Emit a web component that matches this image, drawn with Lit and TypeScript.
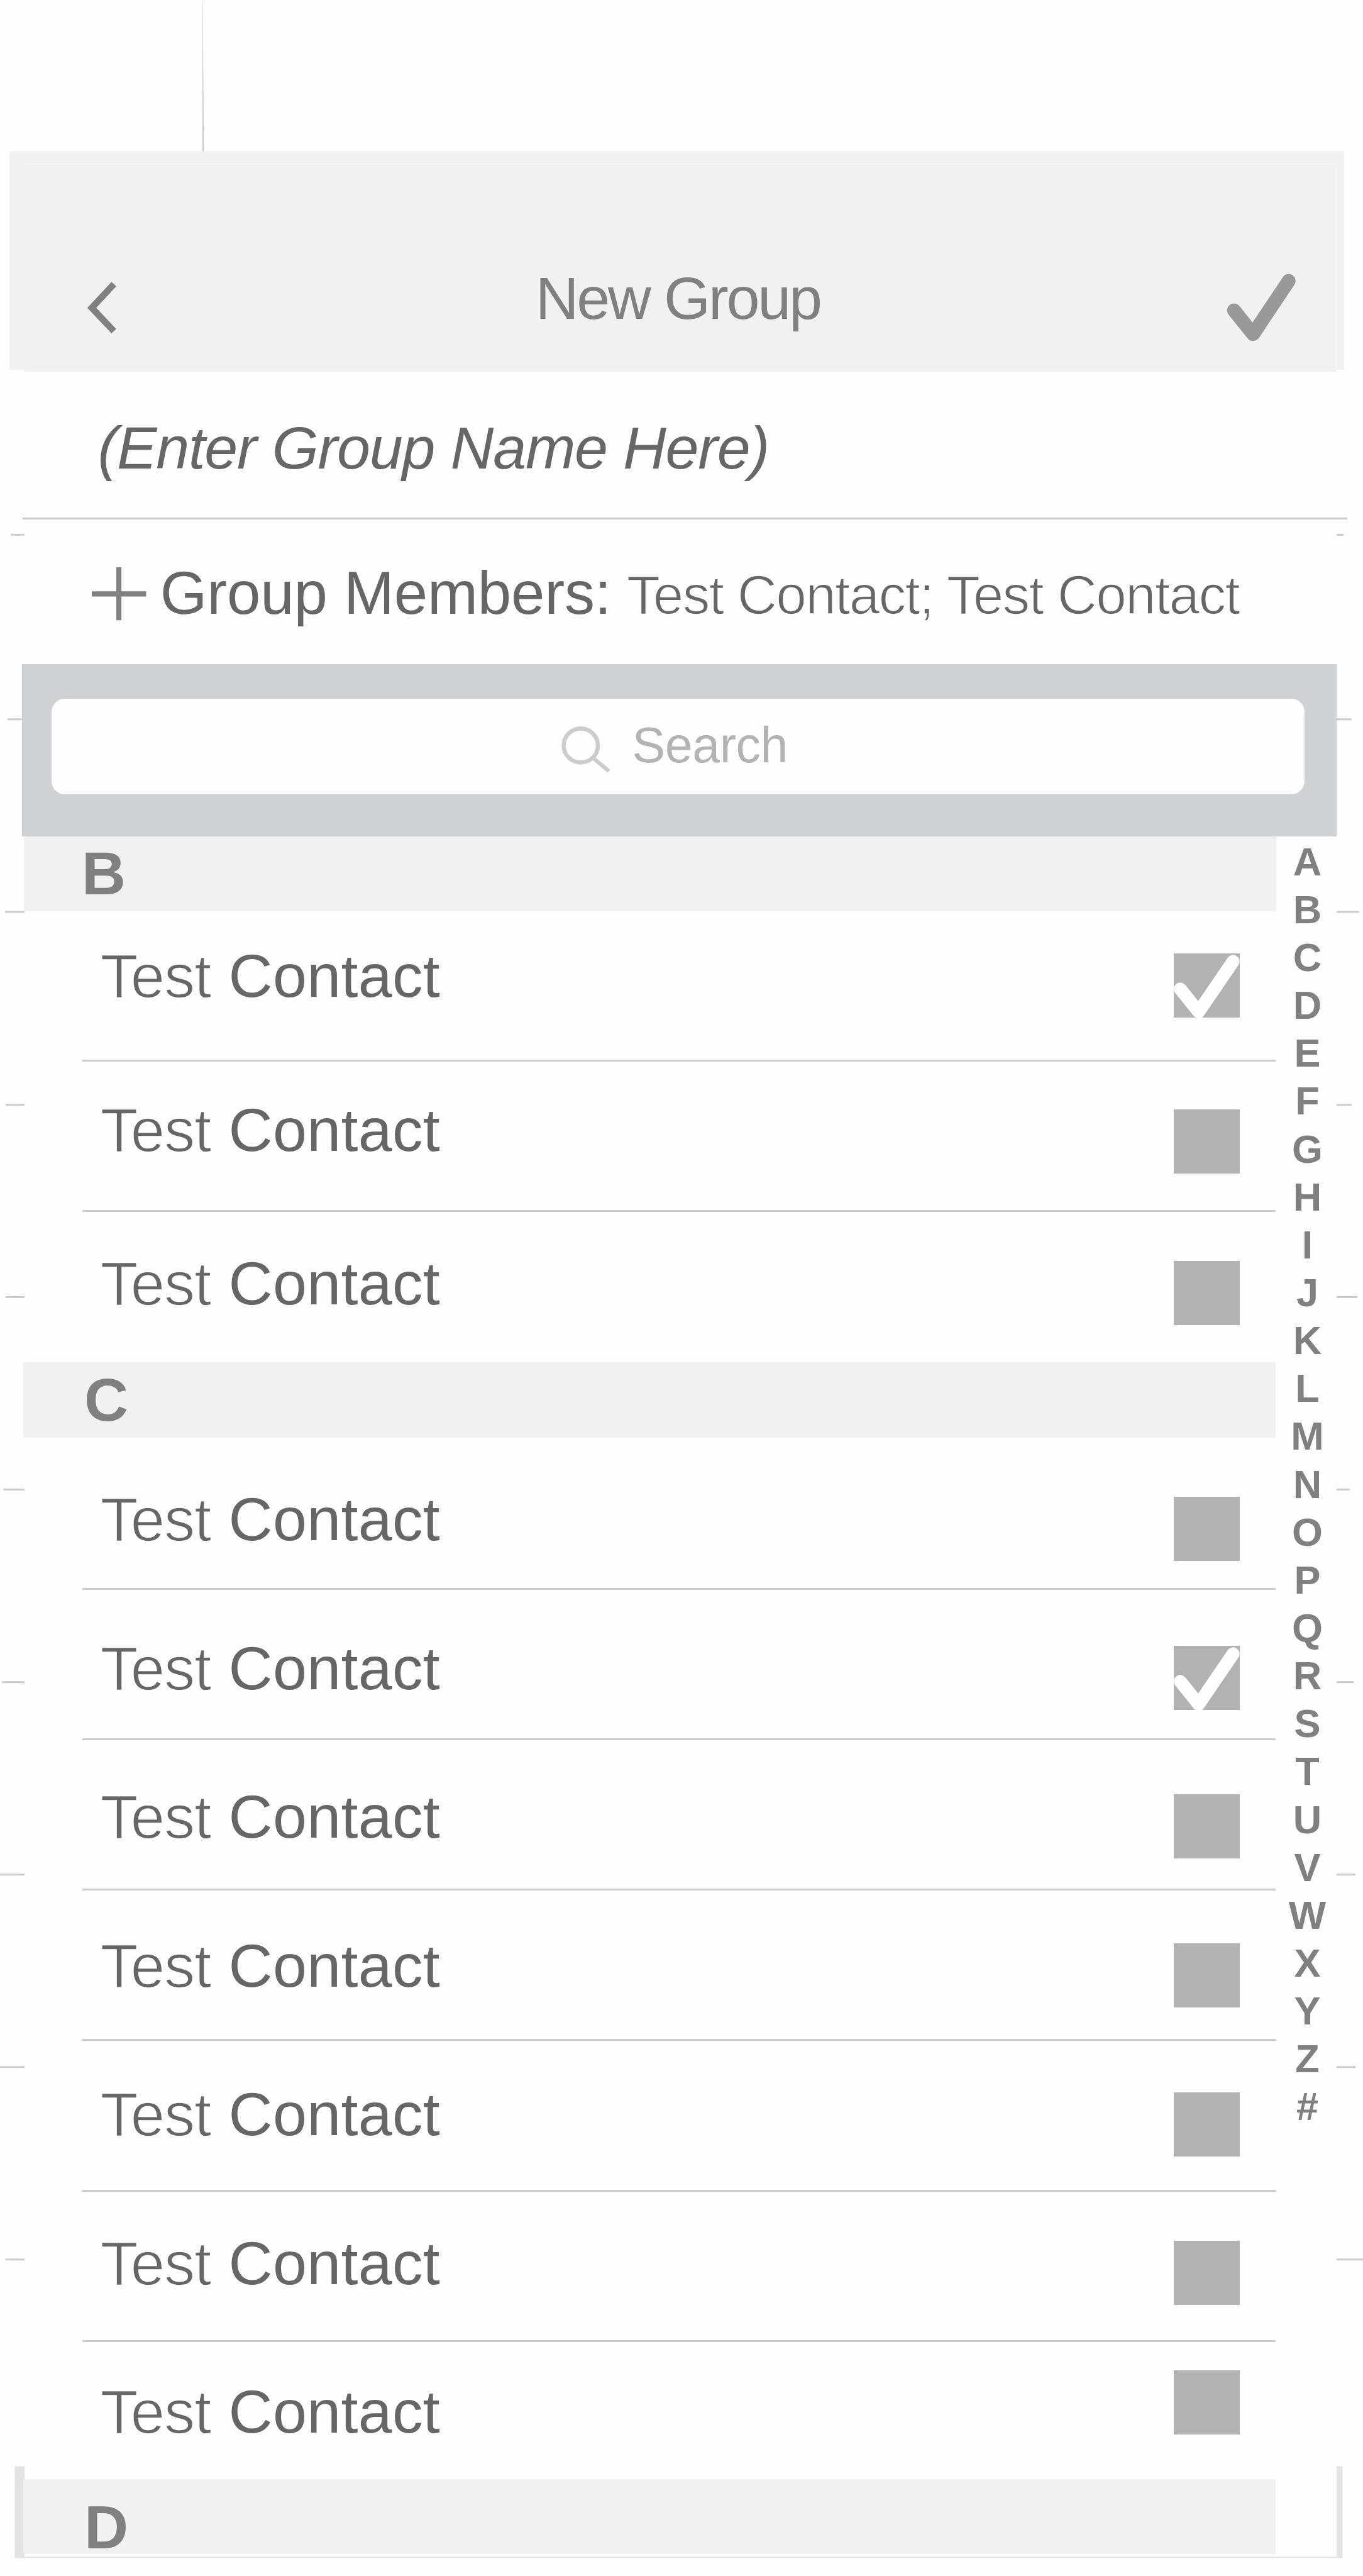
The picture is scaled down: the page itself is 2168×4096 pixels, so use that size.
import { LitElement, html, css, svg, nothing } from "lit";
import { customElement, property } from "lit/decorators.js";

interface Contact {
  first: string;
  last: string;
  checked?: boolean;
  height: number;
  textTop: number;
  boxTop: number;
}

interface Section {
  letter: string;
  kind: string;
  contacts: Contact[];
}

const contact = (height: number, textTop: number, boxTop: number, checked = false): Contact => ({
  first: "Test",
  last: "Contact",
  checked,
  height,
  textTop,
  boxTop,
});

const SECTIONS: Section[] = [
  {
    letter: "B",
    kind: "first",
    contacts: [
      contact(238.7, 52.8, 67.1, true),
      contact(239.3, 58.7, 76.5),
      contact(238.7, 64, 78.1),
    ],
  },
  {
    letter: "C",
    kind: "middle",
    contacts: [
      contact(242.3, 80.6, 94.9),
      contact(239.5, 74.8, 89.5, true),
      contact(238.6, 71.8, 85.9),
      contact(239.2, 69.8, 84.5),
      contact(239.4, 67.1, 81.5),
      contact(239.2, 64.2, 78.5),
      contact(217.9, 61.6, 44.8),
    ],
  },
  { letter: "D", kind: "last", contacts: [] },
];

const INDEX = [..."ABCDEFGHIJKLMNOPQRSTUVWXYZ#"];

/* Rule stubs in the side gutters: [y, left start, left end, right end] */
const STUBS: number[][] = [
  [850.3, 17, 39.2, 2137],
  [1143.7, 12, 39.2, 2150],
  [1450.1, 8, 39.2, 2162],
  [1756.7, 8.8, 39.2, 2150],
  [2062.6, 8.8, 39.2, 2159],
  [2368.5, 5.4, 39.2, 2147],
  [2674.8, 3, 39.2, 2153.5],
  [2980.8, 0, 39.2, 2156],
  [3286.8, 0, 39.2, 2156],
  [3592.8, 8.7, 39.2, 2168],
];

@customElement("contact-row")
class ContactRow extends LitElement {
  @property({ attribute: false }) contact!: Contact;

  static styles = css`
    :host {
      display: flex;
      justify-content: space-between;
      align-items: flex-start;
      box-sizing: border-box;
      margin-left: 131px;
      border-bottom: 3px solid #ccc;
    }
    :host([last]) {
      border-bottom: none;
    }
    .name {
      display: flex;
      margin-left: 28.6px;
      font-size: 97px;
      line-height: 100px;
      color: #666;
      white-space: nowrap;
    }
    .first {
      width: 204px;
      font-size: 98.5px;
      letter-spacing: -1.3px;
      -webkit-text-stroke: 1.7px #fefefe;
    }
    .last {
      letter-spacing: 0.3px;
    }
    .box {
      width: 104.4px;
      height: 102px;
      margin-right: 57.3px;
      background: #b2b2b2;
    }
    .tick {
      display: block;
      width: 100%;
      height: 100%;
    }
  `;

  render() {
    const c = this.contact;
    return html`
      <div class="name" style="margin-top:${c.textTop}px">
        <span class="first">${c.first}</span><span class="last">${c.last}</span>
      </div>
      <div class="box" style="margin-top:${c.boxTop}px">
        ${c.checked
          ? html`<svg class="tick" viewBox="0 0 104.4 102">
              <path
                d="M10.4 56.6 L39.6 92.9 L94.4 12.6"
                fill="none"
                stroke="#fefefe"
                stroke-width="20.5"
                stroke-linecap="round"
                stroke-linejoin="round"
              />
            </svg>`
          : nothing}
      </div>
    `;
  }
}

@customElement("app-root")
class AppRoot extends LitElement {
  static styles = css`
    :host {
      display: block;
      position: relative;
      box-sizing: border-box;
      width: 2168px;
      height: 4096px;
      overflow: hidden;
      padding-top: 260.3px;
      background: #fefefe;
      font-family: "Liberation Sans", Arial, sans-serif;
    }
    .backdrop {
      position: absolute;
      left: 0;
      top: 0;
    }
    .screen {
      position: relative;
      display: flex;
      flex-direction: column;
      align-items: stretch;
    }
    .header {
      display: flex;
      align-items: flex-start;
      box-sizing: border-box;
      height: 331px;
      margin: 0 42px 0 39px;
      border-top: 1px solid #f6f6f6;
      border-right: 1px solid #f6f6f6;
      background: #f1f1f1;
    }
    .back {
      margin: 186px 0 0 98px;
    }
    .title {
      margin: 162.8px 0 0 664.7px;
      width: 1090px;
      font-size: 95.3px;
      line-height: 100px;
      letter-spacing: -3.2px;
      color: #808080;
      white-space: nowrap;
    }
    .done {
      margin: 171px 0 0 8.8px;
    }
    .group-name {
      box-sizing: border-box;
      height: 234.5px;
      margin: 0 25px 0 36px;
      padding: 70.9px 0 0 119.5px;
      border-bottom: 3px solid #ccc;
      font-size: 95.3px;
      line-height: 100px;
      letter-spacing: -1.25px;
      font-style: italic;
      color: #666;
      white-space: nowrap;
    }
    .members {
      display: flex;
      align-items: flex-start;
      height: 230.1px;
      padding-left: 145.8px;
    }
    .plus {
      margin-top: 76.4px;
    }
    .members-text {
      display: flex;
      align-items: baseline;
      margin: 66.8px 0 0 22px;
      line-height: 100px;
      color: #666;
      white-space: nowrap;
    }
    .members-label {
      width: 742px;
      font-size: 96px;
      letter-spacing: -0.2px;
    }
    .members-names {
      font-size: 87.4px;
      letter-spacing: -1.7px;
      -webkit-text-stroke: 1.6px #fefefe;
    }
    .search {
      box-sizing: border-box;
      height: 273.8px;
      margin: 0 42.5px 0 34.7px;
      padding: 54.7px 51px 67px 47.4px;
      background: #d0d1d3;
    }
    .field {
      display: flex;
      align-items: flex-start;
      height: 152.1px;
      border-radius: 21px;
      background: #fefefe;
    }
    .lens {
      margin: 44px 0 0 811px;
    }
    .placeholder {
      margin: 29.2px 0 0 34.5px;
      font-size: 79px;
      line-height: 90px;
      letter-spacing: -0.5px;
      color: #b3b3b3;
    }
    .body {
      display: flex;
      align-items: flex-start;
    }
    .list {
      width: 2029px;
    }
    .bar {
      box-sizing: border-box;
      height: 119.6px;
      margin-left: 37px;
      background: #f1f1f1;
      font-size: 97px;
      font-weight: 700;
      line-height: 100px;
      color: #808080;
    }
    .bar-first {
      margin: 0 -1px 0 38px;
      padding: 9.8px 0 0 92px;
    }
    .bar-middle {
      padding: 9.9px 0 0 97px;
    }
    .bar-last {
      padding: 27.5px 0 0 97px;
    }
    .index {
      display: flex;
      flex-direction: column;
      align-items: center;
      width: 101px;
      margin-top: 2px;
      font-size: 63px;
      font-weight: 700;
      line-height: 76.14px;
      color: #808080;
    }
  `;

  private backdrop() {
    return html`
      <svg class="backdrop" width="2168" height="4096" viewBox="0 0 2168 4096">
        <path d="M322.1 0 H322.5 L324.3 241 H322.1 Z" fill="#c8c8c8" />
        <rect x="15" y="240.4" width="2123" height="347.4" fill="#f1f1f1" />
        ${STUBS.map(
          ([y, l0, l1, r1]) => svg`
            <path d="M${l0} ${y} H${l1} M2126 ${y} H${r1}" stroke="#ccc" stroke-width="3" />
          `,
        )}
        <path d="M23.4 3921.5 H39.2 V4065.2 H2126 V3921.5 H2135.5 V4067.5 H23.4 Z" fill="#e4e4e4" />
      </svg>
    `;
  }

  render() {
    return html`
      ${this.backdrop()}
      <div class="screen">
        <div class="header">
          <svg class="back" width="50" height="86" viewBox="137 447 50 86">
            <path d="M181.2 451.7 L146 489.5 L181 526.5" fill="none" stroke="#808080" stroke-width="10.4" />
          </svg>
          <div class="title">New Group</div>
          <svg class="done" width="112" height="114" viewBox="1950 432 112 114">
            <path
              d="M1962.8 493.5 L1993.2 531.3 L2049.8 446.6"
              fill="none"
              stroke="#999"
              stroke-width="22"
              stroke-linecap="round"
              stroke-linejoin="round"
            />
          </svg>
        </div>
        <div class="group-name">(Enter Group Name Here)</div>
        <div class="members">
          <svg class="plus" width="87" height="85" viewBox="0 0 87 85">
            <path d="M0 42.3 H86.4" stroke="#808080" stroke-width="8.3" />
            <path d="M43.1 0 V84.2" stroke="#808080" stroke-width="8.1" />
          </svg>
          <div class="members-text">
            <span class="members-label">Group Members:</span>
            <span class="members-names">Test Contact; Test Contact</span>
          </div>
        </div>
        <div class="search">
          <div class="field">
            <svg class="lens" width="78" height="74" viewBox="893 1154.6 78 74">
              <ellipse cx="923.8" cy="1185" rx="27.2" ry="27" fill="none" stroke="#ccc" stroke-width="6.6" />
              <path d="M943 1204.5 L968.8 1226" stroke="#ccc" stroke-width="6.4" />
            </svg>
            <div class="placeholder">Search</div>
          </div>
        </div>
        <div class="body">
          <div class="list">
            ${SECTIONS.map(
              (s) => html`
                <div class="bar bar-${s.kind}">${s.letter}</div>
                ${s.contacts.map(
                  (c, i) => html`
                    <contact-row
                      .contact=${c}
                      ?last=${i === s.contacts.length - 1}
                      style="height:${c.height}px"
                    ></contact-row>
                  `,
                )}
              `,
            )}
          </div>
          <div class="index">${INDEX.map((l) => html`<span>${l}</span>`)}</div>
        </div>
      </div>
    `;
  }
}
